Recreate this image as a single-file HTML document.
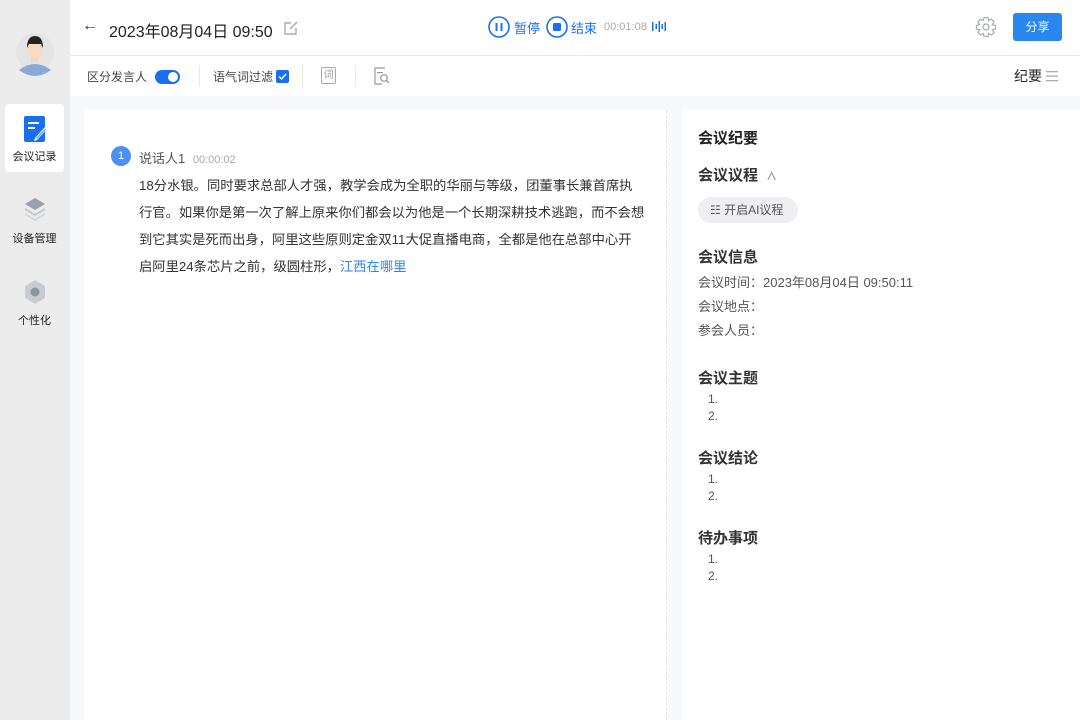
<!DOCTYPE html>
<html><head><meta charset="utf-8"><style>
*{margin:0;padding:0;box-sizing:border-box}
body{width:1080px;height:720px;overflow:hidden;background:#fff;font-family:"Liberation Sans","Noto Sans CJK SC",sans-serif;position:relative;color:#333}
.side{position:absolute;left:0;top:0;width:70px;height:720px;background:#ececec}
.avatar{position:absolute;left:15px;top:30px;width:40px;height:46px}
.nav{position:absolute;left:5px;width:59px;height:68px;text-align:center;font-size:11px;color:#222}
.nav .lbl{position:absolute;left:0;right:0;top:44px}
.hdr{position:absolute;left:70px;top:0;right:0;height:56px;border-bottom:1px solid #e6e6e6;background:#fff}
.tb{position:absolute;left:70px;top:56px;right:0;height:40px;background:#fff}
.main{position:absolute;left:70px;top:96px;right:0;bottom:0;background:#f8f9fb}
.card{position:absolute;left:14px;top:14px;width:582px;bottom:0;background:#fff}
.rp{position:absolute;left:612px;top:14px;right:0;bottom:0;background:#fff}
.t{position:absolute;white-space:nowrap}
h4{font-size:15px;font-weight:bold;color:#222;position:absolute;white-space:nowrap;line-height:20px}
.s{font-size:13px;color:#555;position:absolute;white-space:nowrap;line-height:16px}
.l{font-size:12px;color:#555;position:absolute;white-space:nowrap;line-height:17px}
</style></head><body>
<div class="side">
 <svg class="avatar" viewBox="0 0 40 46"><circle cx="20" cy="22" r="19" fill="#e4e4e4"/><path d="M4 40 Q20 28 36 40 Q28 46 20 46 Q12 46 4 40Z" fill="#8aa9d4"/><rect x="16" y="26" width="8" height="6" fill="#f3d8b8"/><ellipse cx="20" cy="20" rx="7" ry="8" fill="#f6dcc0"/><path d="M12 18 Q12 6 20 6 Q28 6 28 18 L26 14 L14 14Z" fill="#222"/></svg>
 <div class="nav" style="top:104px;background:#fff;border-radius:4px">
  <svg style="position:absolute;left:19px;top:12px" width="24" height="26" viewBox="0 0 24 26"><rect x="0" y="0" width="21" height="26" rx="2" fill="#1a6ff0"/><rect x="4" y="6" width="11" height="2" fill="#fff"/><rect x="4" y="11" width="7" height="2" fill="#fff"/><path d="M11 22 L21 11 L23 13 L13 24 L10 25Z" fill="#fff"/><path d="M12 22 L21 12.5 L22 13.5 L13 23Z" fill="#6aa3f5"/></svg>
  <div class="lbl">会议记录</div></div>
 <div class="nav" style="top:190px">
  <svg style="position:absolute;left:18px;top:6px" width="24" height="26" viewBox="0 0 24 26"><path d="M12 2 L22 8 L12 14 L2 8Z" fill="#9aa0a8"/><path d="M2 13 L12 19 L22 13" stroke="#c4c8ce" stroke-width="2" fill="none"/><path d="M2 18 L12 24 L22 18" stroke="#d4d7db" stroke-width="2" fill="none"/></svg>
  <div class="lbl" style="top:40px">设备管理</div></div>
 <div class="nav" style="top:272px">
  <svg style="position:absolute;left:18px;top:6px" width="24" height="28" viewBox="0 0 24 28"><path d="M12 2 L22 8 L22 20 L12 26 L2 20 L2 8Z" fill="#c8ccd2"/><circle cx="12" cy="14" r="4.5" fill="#8e949c"/></svg>
  <div class="lbl" style="top:40px">个性化</div></div>
</div>
<div class="hdr">
 <div class="t" style="left:12px;top:17px;font-size:16px;color:#333">←</div>
 <div class="t" style="left:39px;top:18px;font-size:16px;color:#222">2023年08月04日 09:50</div>
 <svg style="position:absolute;left:214px;top:21px" width="14" height="14" viewBox="0 0 14 14"><path d="M12 7 V13 H1 V2 H7" stroke="#aaa" stroke-width="1.4" fill="none"/><path d="M6 8 L13 1" stroke="#aaa" stroke-width="1.4"/></svg>
 <svg style="position:absolute;left:418px;top:16px" width="22" height="22"><circle cx="11" cy="11" r="10" stroke="#1a6ff0" stroke-width="1.6" fill="none"/><rect x="7.5" y="7" width="2" height="8" fill="#1a6ff0"/><rect x="12.5" y="7" width="2" height="8" fill="#1a6ff0"/></svg>
 <div class="t" style="left:444px;top:18px;font-size:13px;color:#1a6ff0">暂停</div>
 <svg style="position:absolute;left:476px;top:16px" width="22" height="22"><circle cx="11" cy="11" r="10" stroke="#1a6ff0" stroke-width="1.6" fill="none"/><rect x="7" y="7" width="8" height="8" rx="1.5" fill="#1a6ff0"/></svg>
 <div class="t" style="left:501px;top:18px;font-size:13px;color:#1a6ff0">结束</div>
 <div class="t" style="left:534px;top:21px;font-size:11px;color:#aaa">00:01:08</div>
 <svg style="position:absolute;left:582px;top:21px" width="14" height="11"><rect x="0" y="1" width="1.5" height="9" fill="#1a6ff0"/><rect x="3.5" y="3" width="1.5" height="5" fill="#1a6ff0"/><rect x="6.5" y="0" width="1.5" height="11" fill="#1a6ff0"/><rect x="9.5" y="3" width="1.5" height="5" fill="#1a6ff0"/><rect x="12.5" y="1" width="1.5" height="9" fill="#1a6ff0"/></svg>
 <svg style="position:absolute;left:905px;top:16px" width="22" height="22" viewBox="0 0 22 22"><path d="M9 1.5 H13 L13.7 4.5 L16.5 3.2 L19 6 L17.4 8.6 L20.5 9.5 V13 L17.4 13.6 L19 16.5 L16.5 19 L13.7 17.6 L13 20.5 H9 L8.3 17.6 L5.5 19 L3 16.5 L4.6 13.6 L1.5 13 V9.5 L4.6 8.6 L3 6 L5.5 3.2 L8.3 4.5Z" stroke="#aab0b8" stroke-width="1.3" fill="none"/><circle cx="11" cy="11" r="3" stroke="#aab0b8" stroke-width="1.3" fill="none"/></svg>
 <div style="position:absolute;left:943px;top:13px;width:49px;height:28px;background:#2b87f0;border-radius:3px;color:#fff;font-size:12px;text-align:center;line-height:28px">分享</div>
</div>
<div class="tb">
 <div class="t" style="left:17px;top:12px;font-size:12px;color:#444">区分发言人</div>
 <div style="position:absolute;left:85px;top:14px;width:25px;height:14px;border-radius:7px;background:#1a6ff0"><div style="position:absolute;right:2px;top:2px;width:10px;height:10px;border-radius:5px;background:#fff"></div></div>
 <div style="position:absolute;left:129px;top:9px;width:1px;height:22px;background:#e8e8e8"></div>
 <div class="t" style="left:143px;top:12px;font-size:12px;color:#444">语气词过滤</div>
 <div style="position:absolute;left:206px;top:14px;width:13px;height:13px;border-radius:2px;background:#1a6ff0"><svg width="13" height="13"><path d="M3 6.5 L5.5 9 L10 4" stroke="#fff" stroke-width="1.4" fill="none"/></svg></div>
 <div style="position:absolute;left:232px;top:9px;width:1px;height:22px;background:#e8e8e8"></div>
 <div style="position:absolute;left:251px;top:11px;width:15px;height:17px;border:1px solid #aaa;border-radius:2px;font-size:10px;color:#999;text-align:center;line-height:15px">词</div>
 <div style="position:absolute;left:285px;top:9px;width:1px;height:22px;background:#e8e8e8"></div>
 <svg style="position:absolute;left:304px;top:11px" width="16" height="18"><path d="M11 1 H1 V17 H8" stroke="#999" stroke-width="1.2" fill="none"/><rect x="3" y="5" width="6" height="1.2" fill="#999"/><circle cx="10" cy="11" r="3.3" stroke="#999" stroke-width="1.2" fill="none"/><path d="M12.5 13.5 L15 16" stroke="#999" stroke-width="1.3"/></svg>
 <div class="t" style="left:944px;top:10px;font-size:14px;color:#222">纪要</div>
 <svg style="position:absolute;left:976px;top:14px" width="13" height="12"><rect x="0" y="1" width="12" height="1.3" fill="#aab"/><rect x="0" y="5.5" width="12" height="1.3" fill="#aab"/><rect x="0" y="10" width="12" height="1.3" fill="#aab"/></svg>
</div>
<div class="main">
 <div class="card">
  <div style="position:absolute;left:27px;top:36px;width:20px;height:20px;border-radius:10px;background:#4c8ff5;color:#fff;font-size:11px;text-align:center;line-height:20px">1</div>
  <div class="t" style="left:55px;top:38px;font-size:13px;color:#555">说话人1 <span style="font-size:11px;color:#aaa;margin-left:4px">00:00:02</span></div>
  <div style="position:absolute;left:55px;top:62px;width:506px;font-size:13.3px;line-height:27px;color:#333">18分水银。同时要求总部人才强，教学会成为全职的华丽与等级，团董事长兼首席执<br>行官。如果你是第一次了解上原来你们都会以为他是一个长期深耕技术逃跑，而不会想<br>到它其实是死而出身，阿里这些原则定金双11大促直播电商，全都是他在总部中心开<br>启阿里24条芯片之前，级圆柱形，<span style="color:#2b87f0">江西在哪里</span></div>
  <div style="position:absolute;right:-1px;top:0;bottom:0;border-right:1px dashed #eaeaea"></div>
 </div>
 <div class="rp">
  <h4 style="left:16px;top:19px">会议纪要</h4>
  <h4 style="left:16px;top:56px;color:#333">会议议程 <span style="font-size:11px;color:#999;margin-left:4px">∧</span></h4>
  <div style="position:absolute;left:16px;top:87px;width:100px;height:26px;border-radius:13px;background:#efeff3;font-size:12px;color:#555;line-height:26px;padding-left:12px">☷ 开启AI议程</div>
  <h4 style="left:16px;top:138px;color:#333">会议信息</h4>
  <div class="s" style="left:16px;top:165px">会议时间：2023年08月04日 09:50:11</div>
  <div class="s" style="left:16px;top:189px">会议地点：</div>
  <div class="s" style="left:16px;top:213px">参会人员：</div>
  <h4 style="left:16px;top:259px;color:#333">会议主题</h4>
  <div class="l" style="left:26px;top:281px">1.<br>2.</div>
  <h4 style="left:16px;top:339px;color:#333">会议结论</h4>
  <div class="l" style="left:26px;top:361px">1.<br>2.</div>
  <h4 style="left:16px;top:419px;color:#333">待办事项</h4>
  <div class="l" style="left:26px;top:441px">1.<br>2.</div>
 </div>
</div>
</body></html>
